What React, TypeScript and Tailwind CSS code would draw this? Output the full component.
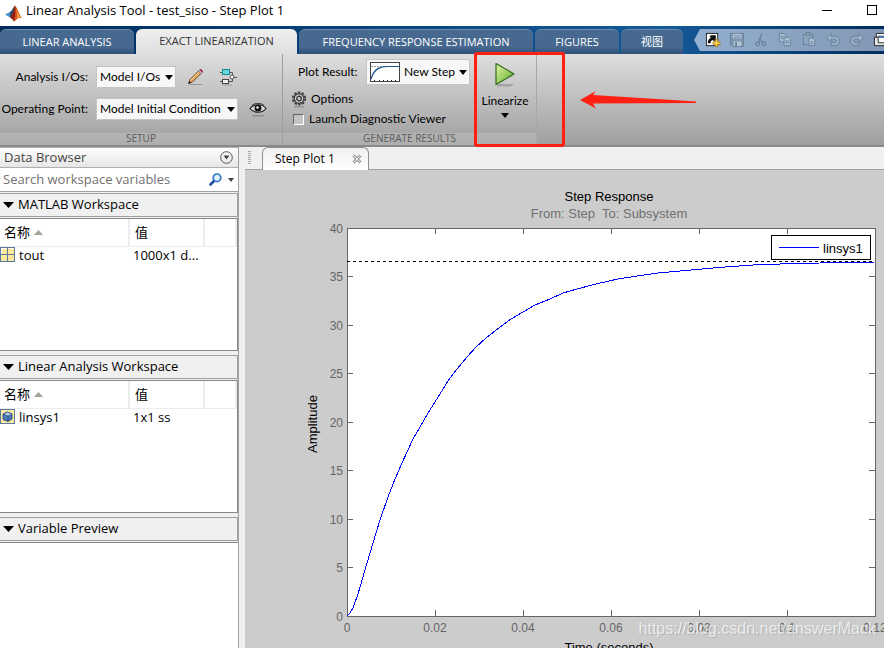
import React from 'react';
import clsx from 'clsx';

type Row = { name: string; value: string; icon: React.ReactNode };

const ribbonTabs = [
  { label: 'LINEAR ANALYSIS', width: 'w-[134px]' },
  { label: 'EXACT LINEARIZATION', width: 'w-[161px]', active: true },
  { label: 'FREQUENCY RESPONSE ESTIMATION', width: 'w-[234px]' },
  { label: 'FIGURES', width: 'w-[84px]' },
  { label: '视图', width: 'w-[62px]' },
];

/* ---------- icons ---------- */

const MatlabLogo = () => (
  <svg width="17" height="17" viewBox="0 0 17 17">
    <path d="M0 9.500 5 7l2.500 3L5 12.500Z" fill="#4a90c2" />
    <path d="M5 7C7 6 8 2 10 .5L8 11 5 12.500Z" fill="#23527c" />
    <path d="M10 .5C8.500 5 8 9 5 12.500c2 0 2.500 2 4 4 2-1 4-5 8-3.500C14.500 10 12.500 3 10 .5Z" fill="#d9541e" />
    <path d="M10 .5c1 3 .5 9.500-1 16-.8-1-1.500-3-4-4C8 9 8.500 4 10 .5Z" fill="#8c2313" />
    <path d="M11 3.500c1.500 3 2.500 6.500 6 9.500-2-.8-3.500-.5-5 1 .5-4 0-7-1-10.500Z" fill="#f29a3c" />
  </svg>
);

const Caret = ({ className }: { className?: string }) => (
  <svg width="8" height="5" viewBox="0 0 8 5" className={className}>
    <path d="M0 0h8L4 5Z" fill="currentColor" />
  </svg>
);

const PencilIcon = () => (
  <svg width="18" height="18" viewBox="0 0 18 18">
    <path d="M3 16h12v1H2Z" fill="#000" opacity=".25" />
    <path d="m1.500 15.500 1.500-4L11.500 3 14 5.500 5.500 14Z" fill="#e0a458" stroke="#5b3a12" strokeWidth=".8" />
    <path d="M3.500 12.500 12.500 3.800" stroke="#fbe0ad" strokeWidth="1" />
    <path d="m1.300 15.700 1-2.700 1.700 1.700Z" fill="#111" />
    <path d="m11.500 3 1.200-1.200L15.200 4.300 14 5.500Z" fill="#ddd" stroke="#555" strokeWidth=".5" />
    <path d="M12.700 1.800c1-1.200 3.600 1.100 2.500 2.500Z" fill="#d6336c" stroke="#8d1741" strokeWidth=".8" />
  </svg>
);

const DiagramIcon = () => (
  <svg width="17" height="18" viewBox="0 0 17 18" fill="none">
    <path d="M2 16.500h10v1H2Z" fill="#000" opacity=".2" />
    <path d="M0 4.500h3M9 4.500h3.500v3M0 13.500h3M9 13.500h3.500v-3M14 9.500h3" stroke="#555" />
    <rect x="2.500" y="1.500" width="7" height="5" fill="#6fd3d8" stroke="#168f9c" />
    <rect x="2.500" y="11.500" width="6" height="4" fill="#eee" stroke="#444" />
    <circle cx="12" cy="9" r="2" fill="#fff" stroke="#555" />
  </svg>
);

const EyeIcon = () => (
  <svg width="18" height="16" viewBox="0 0 18 16">
    <path d="M3 14h12v1.500H3Z" fill="#000" opacity=".2" />
    <path d="M1 7.500C4.500 2.500 13.500 2.500 17 7.500 13.500 12.500 4.500 12.500 1 7.500Z" fill="#ddd" stroke="#222" strokeWidth="1.200" />
    <circle cx="9" cy="7.200" r="3.400" fill="#111" />
    <circle cx="8.500" cy="6.500" r="1.200" fill="#fff" />
    <path d="M3 4.300C6.500 1.800 11.500 1.800 15 4.300" fill="none" stroke="#333" />
  </svg>
);

const GearIcon = () => (
  <svg width="16" height="17" viewBox="0 0 16 17" fill="none">
    <path d="M3 15h10v1.500H3Z" fill="#000" opacity=".2" />
    <circle cx="8" cy="7.500" r="6.200" stroke="#444" strokeWidth="1.800" strokeDasharray="2.500 1.400" />
    <circle cx="8" cy="7.500" r="4.800" fill="#d4d4d4" stroke="#444" strokeWidth="1.400" />
    <circle cx="8" cy="7.500" r="2.300" fill="#c4c4c4" stroke="#333" strokeWidth="1.300" />
  </svg>
);

const StepThumb = () => (
  <svg width="30" height="20" viewBox="0 0 30 20" className="shrink-0">
    <rect x=".5" y=".5" width="29" height="19" fill="#fff" stroke="#444" />
    <path d="M1 4.500h28" stroke="#999" strokeDasharray="2 1" />
    <path d="M1 17C4 6 11 4.500 18 4.500h11" fill="none" stroke="#1b4f8a" strokeWidth="1.200" />
    <path d="M4.500 19v-1M9.500 19v-1M13.500 19v-1M17.500 19v-1M21.500 19v-1M25.500 19v-1" stroke="#222" />
  </svg>
);

const PlayIcon = () => (
  <svg width="22" height="25" viewBox="0 0 22 25">
    <defs>
      <linearGradient id="play" x1="0" y1="0" x2="1" y2="1">
        <stop offset="0" stopColor="#e2f5a8" />
        <stop offset="1" stopColor="#5cac22" />
      </linearGradient>
    </defs>
    <path d="M3 22h17l-3 2.500H3Z" fill="#000" opacity=".18" />
    <path d="M2 1.500 20 12 2 22.500Z" fill="url(#play)" stroke="#2f6b1c" strokeWidth="1.200" strokeLinejoin="round" />
  </svg>
);

const SearchIcon = () => (
  <svg width="13" height="13" viewBox="0 0 13 13" fill="none">
    <path d="M1.500 11.500 5 8" stroke="#1f4f9e" strokeWidth="2.600" strokeLinecap="round" />
    <circle cx="8" cy="4.800" r="3.800" fill="#e4f2fb" stroke="#3278c8" strokeWidth="1.700" />
  </svg>
);

const DoubleIcon = () => (
  <svg width="15" height="15" viewBox="0 0 15 15">
    <rect x=".5" y=".5" width="14" height="14" fill="#fbe89a" stroke="#5a789c" />
    <path d="M7.500 1v13M1 7.500h13" stroke="#5a789c" />
    <path d="M1.500 6.500v-5h5M8.500 1.500h5" stroke="#fff" fill="none" />
  </svg>
);

const SystemIcon = () => (
  <svg width="15" height="15" viewBox="0 0 15 15">
    <rect x=".5" y=".5" width="14" height="14" fill="#fbeaa6" stroke="#5a789c" />
    <path d="m3 5 4.500-2L12 5v5l-4 2.500L3 10.500Z" fill="#4d7bb8" stroke="#223f6b" strokeWidth=".8" />
    <path d="m3 5 4.500-2L12 5 8 7Z" fill="#b5cdea" stroke="#223f6b" strokeWidth=".6" />
    <path d="M8 7v5.500" stroke="#223f6b" strokeWidth=".8" />
  </svg>
);

const quickIcons = [
  {
    name: 'Create shortcut',
    art: (
      <>
        <rect x="1.500" y="1.500" width="12" height="13" fill="#fff" stroke="#222" />
        <path d="M3 12c0-3 1-5 3.500-5.500L5 5l1-1.500h5.500v5L10 10 8.500 8.500C6.500 9 6 10 6 12Z" fill="#111" />
        <path d="M11 8h2.500v2.500H16V13h-2.500v2.500H11V13H8.500v-2.500H11Z" fill="#ffd95a" stroke="#a77400" strokeWidth=".8" />
      </>
    ),
  },
  {
    name: 'Save',
    art: (
      <>
        <path d="M1.500 1.500h14v14h-12l-2-2Z" fill="#8096af" stroke="#66809c" />
        <rect x="4" y="2" width="9" height="5" fill="#b4c5d8" />
        <path d="M5 4h7M5 6h7" stroke="#7890ab" />
        <path d="M5 10h8v5H5Z" fill="#b4c5d8" />
        <path d="M6.500 11h2v4h-2Z" fill="#66809c" />
      </>
    ),
  },
  {
    name: 'Cut',
    art: (
      <g fill="none" stroke="#66809c" strokeWidth="1.300">
        <path d="M9.500 1 6.500 10M6 6l4.500 5" />
        <circle cx="5" cy="12.500" r="2" />
        <circle cx="11.500" cy="12.500" r="2" />
      </g>
    ),
  },
  {
    name: 'Copy',
    art: (
      <g fill="#a9bdd2" stroke="#66809c">
        <path d="M2.500 1.500h5l2 2v7h-7Z" />
        <path d="M7.500 5.500h5l2 2v7h-7Z" />
        <path d="M4 4.500h3M4 6.500h3M9 9.500h4M9 11.500h4" />
      </g>
    ),
  },
  {
    name: 'Paste',
    art: (
      <g fill="#8ea5bd" stroke="#66809c">
        <rect x="2.500" y="2.500" width="10" height="11" />
        <rect x="5.500" y=".5" width="4" height="3" />
        <path d="M8.500 6.500h4l2 2v6h-6Z" fill="#b0c3d7" />
        <path d="M10 10.500h3M10 12.500h3" />
      </g>
    ),
  },
  {
    name: 'Undo',
    art: <path d="M6.500 1.500 1.500 6l5 4.500V7.500H10c3 0 3 4 0 4H6.500v3H10c7 0 7-10 0-10H6.500Z" fill="#9db3ca" stroke="#66809c" />,
  },
  {
    name: 'Redo',
    art: <path d="m10.500 1.500 5 4.500-5 4.500V7.500H7c-3 0-3 4 0 4h3.500v3H7c-7 0-7-10 0-10h3.500Z" fill="#9db3ca" stroke="#66809c" />,
  },
  {
    name: 'Switch windows',
    art: (
      <g stroke="#222">
        <path d="M3.500 1.500h12v10h-12Z" fill="#fff" />
        <path d="M1.500 5.500h12v9h-12Z" fill="#e8e8e8" />
        <path d="M5.500 4.500h11v7h-11Z" fill="#fff" />
        <path d="M6 5.500h10" stroke="#4d7bb8" strokeWidth="2" />
      </g>
    ),
  },
];

/* ---------- ribbon ---------- */

const TitleBar = () => (
  <header className="flex h-[26px] shrink-0 items-center bg-white pl-[5px] text-[13px] text-black">
    <MatlabLogo />
    <h1 className="ml-1 flex-1 whitespace-nowrap pb-1">Linear Analysis Tool - test_siso - Step Plot 1</h1>
    <button aria-label="Minimize" className="mr-[35px] flex h-5 w-[10px] items-start pt-[7px]">
      <span className="h-px w-full bg-black" />
    </button>
    <button aria-label="Maximize" className="mb-[6px] mr-[7px] size-[10px] border border-black" />
  </header>
);

const TabBar = () => (
  <div className="flex h-7 shrink-0 items-end gap-[2px] overflow-hidden bg-linear-to-r from-[#002a5c] via-[#155a99] via-75% to-[#002e60]">
    {ribbonTabs.map((tab) => (
      <button
        key={tab.label}
        className={clsx(
          'h-[25px] shrink-0 whitespace-nowrap rounded-t-md text-[11px]',
          tab.width,
          tab.active
            ? 'bg-linear-to-b from-[#f0f0f0] to-[#dedede] text-[#333]'
            : 'border-t border-[#6f8fb0] bg-linear-to-b from-[#47698f] from-70% to-[#2f5078] text-white',
        )}
      >
        {tab.label}
      </button>
    ))}
    <div className="ml-[9px] mb-[3px] flex h-[22px] flex-1 items-center gap-2 overflow-hidden bg-linear-to-r from-[#93afcf] to-[#8398b5] pl-[11px] [clip-path:polygon(0_50%,6px_0,100%_0,100%_100%,6px_100%)]">
      {quickIcons.map((icon) => (
        <button key={icon.name} aria-label={icon.name} className="shrink-0">
          <svg width="16" height="16" viewBox="0 0 17 17">
            {icon.art}
          </svg>
        </button>
      ))}
    </div>
  </div>
);

type PickerProps = { id: string; value: string; className: string; thumb?: React.ReactNode };

const Picker = ({ id, value, className, thumb }: PickerProps) => (
  <div className={clsx('relative flex items-center border border-[#c4c4c4] bg-[#f7f7f7] pl-[3px]', className)}>
    {thumb}
    <select id={id} className="h-full w-full appearance-none bg-transparent text-xs text-black outline-none">
      <option>{value}</option>
    </select>
    <Caret className="pointer-events-none absolute right-[2px]" />
  </div>
);

const SectionLabel = ({ children }: { children: React.ReactNode }) => (
  <div className="flex h-3 shrink-0 items-center justify-center bg-white/15 font-['Open_Sans',sans-serif] text-[10px] text-[#5c5c5c]">
    {children}
  </div>
);

const Toolstrip = () => (
  <div className="flex h-[93px] shrink-0 border-b-2 border-[#8a8a8a] bg-linear-to-b from-[#dedede] to-[#9f9f9f] font-['Lato',sans-serif] text-xs text-black">
    <section className="flex w-[283px] shrink-0 flex-col border-r border-[#9d9d9d]">
      <div className="flex flex-1 flex-col gap-[10px] pt-3">
        <div className="flex h-[22px] items-center">
          <label htmlFor="ios" className="mr-2 w-[88px] shrink-0 whitespace-nowrap text-right">Analysis I/Os:</label>
          <Picker id="ios" value="Model I/Os" className="h-[22px] w-20" />
          <button aria-label="Edit I/Os" className="ml-[11px]"><PencilIcon /></button>
          <button aria-label="Highlight I/Os" className="ml-[15px]"><DiagramIcon /></button>
        </div>
        <div className="flex h-[22px] items-center">
          <label htmlFor="op" className="mr-2 w-[88px] shrink-0 whitespace-nowrap text-right">Operating Point:</label>
          <Picker id="op" value="Model Initial Condition" className="h-[22px] w-[142px]" />
          <button aria-label="View operating point" className="ml-[11px]"><EyeIcon /></button>
        </div>
      </div>
      <SectionLabel>SETUP</SectionLabel>
    </section>

    <section className="flex w-[254px] shrink-0 flex-col border-r border-[#a8a8a8]">
      <div className="flex flex-1">
        <div className="flex w-[191px] flex-col pl-2 pt-[5px]">
          <div className="flex items-center pl-[7px]">
            <label htmlFor="plot" className="w-[68px] shrink-0 whitespace-nowrap">Plot Result:</label>
            <Picker
              id="plot"
              value="New Step"
              className="h-[26px] w-[104px] gap-1"
              thumb={<StepThumb />}
            />
          </div>
          <button className="mt-1 flex h-5 items-center gap-1">
            <GearIcon />
            Options
          </button>
          <label className="flex h-5 items-center gap-[5px] whitespace-nowrap pl-[2px]">
            <input type="checkbox" className="size-[11px] appearance-none border border-[#666] border-b-white border-r-white bg-[#c4c4c4]" />
            Launch Diagnostic Viewer
          </label>
        </div>
        <button className="flex flex-1 flex-col items-center pt-2">
          <PlayIcon />
          <span className="mt-[6px]">Linearize</span>
          <Caret className="mt-1" />
        </button>
      </div>
      <SectionLabel>GENERATE RESULTS</SectionLabel>
    </section>
  </div>
);

/* ---------- data browser ---------- */

const PaneHeader = ({ children }: { children: React.ReactNode }) => (
  <button className="flex h-6 w-full shrink-0 items-center gap-1 border border-l-0 border-[#a0a0a0] bg-[#f0f0f0] pl-[3px] text-left text-[13px] text-black">
    <svg width="11" height="6" viewBox="0 0 11 6">
      <path d="M0 0h11L5.500 6Z" />
    </svg>
    {children}
  </button>
);

const Workspace = ({ title, rows }: { title: string; rows: Row[] }) => (
  <section className="shrink-0">
    <PaneHeader>{title}</PaneHeader>
    <div className="mb-1 mt-px h-[133px] border border-l-0 border-[#828790] bg-white">
      <table className="w-full table-fixed text-[13px] leading-4 text-black">
        <thead>
          <tr className="h-[27px] border-b border-[#ececec] text-left">
            <th className="w-[129px] border-r-2 border-[#ececec] pl-1 font-normal">
              <span className="flex items-center gap-1">
                名称
                <svg width="9" height="5" viewBox="0 0 9 5">
                  <path d="M0 5h9L4.500 0Z" fill="#a3a396" />
                </svg>
              </span>
            </th>
            <th className="w-[75px] border-r-2 border-[#ececec] pl-[5px] font-normal">值</th>
            <th className="border-r-2 border-[#ececec]" />
          </tr>
        </thead>
        <tbody>
          {rows.map((row) => (
            <tr key={row.name} className="h-4">
              <td className="whitespace-nowrap">
                <span className="flex items-center gap-1">
                  {row.icon}
                  {row.name}
                </span>
              </td>
              <td className="whitespace-nowrap pl-1">{row.value}</td>
              <td />
            </tr>
          ))}
        </tbody>
      </table>
    </div>
  </section>
);

const DataBrowser = () => (
  <aside className="flex w-[239px] shrink-0 flex-col border-r border-[#a0a0a0]">
    <div className="flex h-[21px] shrink-0 items-center border-b border-t border-[#b0b0b0] bg-linear-to-b from-white to-[#e6e6e6] pl-1 text-[13px] text-[#444]">
      <h2 className="flex-1">Data Browser</h2>
      <button aria-label="Panel actions" className="mr-[5px]">
        <svg width="13" height="13" viewBox="0 0 13 13">
          <circle cx="6.500" cy="6.500" r="5.800" fill="none" stroke="#555" />
          <path d="M3.500 4.500h6l-3 4Z" fill="#444" />
        </svg>
      </button>
    </div>
    <div className="mb-px flex h-6 shrink-0 items-center border-b border-[#a0a0a0] bg-white pl-[3px]">
      <input
        aria-label="Search workspace variables"
        placeholder="Search workspace variables"
        className="min-w-0 flex-1 text-[13px] outline-none placeholder:text-[#707070]"
      />
      <button aria-label="Search"><SearchIcon /></button>
      <button aria-label="Search options" className="ml-[6px] mr-1 text-[#444]">
        <svg width="6" height="4" viewBox="0 0 6 4"><path d="M0 0h6L3 4Z" fill="currentColor" /></svg>
      </button>
    </div>
    <Workspace title="MATLAB Workspace" rows={[{ name: 'tout', value: '1000x1 d...', icon: <DoubleIcon /> }]} />
    <Workspace title="Linear Analysis Workspace" rows={[{ name: 'linsys1', value: '1x1 ss', icon: <SystemIcon /> }]} />
    <PaneHeader>Variable Preview</PaneHeader>
    <div className="mt-px flex-1 border-t border-[#828790] bg-white" />
  </aside>
);

/* ---------- step plot ---------- */

// plot area inside the figure
const AX = { left: 102, right: 630, top: 58, bottom: 446 };

const curve = [
  [102, 446], [105, 443], [108, 438], [113, 424], [122, 393], [128, 373], [135, 350], [143, 327], [150, 309],
  [157, 293], [168, 269], [175, 257], [183, 243], [190, 232], [203, 211], [212, 199], [222, 187], [231, 177],
  [241, 168], [255, 157], [266, 149], [278, 142], [290, 135], [305, 129], [318, 123], [332, 119], [351, 114],
  [373, 109], [392, 106], [413, 103], [435, 101], [457, 99], [480, 97], [508, 95], [535, 94], [575, 93], [630, 92],
];

const xTicks = ['0', '0.02', '0.04', '0.06', '0.08', '0.1', '0.12'];
const yTicks = [0, 5, 10, 15, 20, 25, 30, 35, 40];

const xAt = (i: number) => AX.left + Math.round((i * (AX.right - AX.left)) / 6);
const yAt = (v: number) => AX.bottom - Math.round((v * (AX.bottom - AX.top)) / 40);

const StepPlot = () => (
  <svg viewBox="0 0 639 488" className="block w-full font-['Liberation_Sans',sans-serif] text-[13px]" role="img" aria-label="Step Response">
    <text x="364" y="31" textAnchor="middle">Step Response</text>
    <text x="364" y="48" textAnchor="middle" fill="#707070" xmlSpace="preserve">From: Step  To: Subsystem</text>
    <g shapeRendering="crispEdges" fill="none" stroke="#666">
      <rect x={AX.left + 0.5} y={AX.top + 0.5} width={AX.right - AX.left} height={AX.bottom - AX.top} fill="#fff" />
      {xTicks.map((t, i) => (
        <path key={t} d={`M${xAt(i) + 0.5} ${AX.bottom}v-6M${xAt(i) + 0.5} ${AX.top}v6`} />
      ))}
      {yTicks.map((v) => (
        <path key={v} d={`M${AX.left} ${yAt(v) + 0.5}h6M${AX.right} ${yAt(v) + 0.5}h-6`} />
      ))}
      <path d={`M${AX.left} 91.500H${AX.right}`} stroke="#000" strokeDasharray="3 3" />
      <polyline points={curve.map((p) => p.join(',')).join(' ')} stroke="#0000ff" />
      <rect x="526.500" y="65.500" width="99" height="24" fill="#fff" stroke="#000" />
      <path d="M534 77.500h40" stroke="#0000ff" />
    </g>
    <text x="578" y="83">linsys1</text>
    <g fill="#666" className="text-xs">
      {xTicks.map((t, i) => (
        <text key={t} x={xAt(i)} y="462" textAnchor="middle">{t}</text>
      ))}
      {yTicks.map((v) => (
        <text key={v} x="98" y={yAt(v) + 5} textAnchor="end">{v}</text>
      ))}
    </g>
    <text transform="translate(72 254) rotate(-90)" textAnchor="middle">Amplitude</text>
    <text x="364" y="482" textAnchor="middle">Time (seconds)</text>
  </svg>
);

const PlotArea = () => (
  <main className="flex min-w-0 flex-1 flex-col overflow-hidden">
    <div className="flex h-[23px] shrink-0 items-stretch">
      <div className="flex w-[17px] justify-center border-b border-[#a0a0a0] py-1 pr-2">
        <span className="w-[3px] bg-[repeating-linear-gradient(#aaa_0_1px,transparent_1px_2px)]" />
      </div>
      <div className="flex w-[107px] items-center rounded-t-md border border-b-0 border-[#909090] bg-linear-to-b from-[#f0f0f0] to-white pl-3 text-xs text-black">
        <button className="flex-1 whitespace-nowrap text-left">Step Plot 1</button>
        <button aria-label="Close Step Plot 1" className="mr-[6px]">
          <svg width="10" height="10" viewBox="0 0 10 10">
            <path d="m1.500 1.500 7 7m0-7-7 7" stroke="#999" strokeWidth="3" />
            <path d="m1.500 1.500 7 7m0-7-7 7" stroke="#eee" strokeWidth="1" />
          </svg>
        </button>
      </div>
      <div className="flex-1 border-b border-[#a0a0a0]" />
    </div>
    <div className="flex-1 overflow-hidden bg-[#ccc]">
      <StepPlot />
    </div>
  </main>
);

export default function App() {
  return (
    <div className="relative flex h-screen flex-col overflow-hidden bg-[#f0f0f0] font-['Open_Sans','Noto_Sans_CJK_SC',sans-serif]">
      <TitleBar />
      <TabBar />
      <Toolstrip />
      <div className="flex min-h-0 flex-1 gap-[6px]">
        <DataBrowser />
        <PlotArea />
      </div>

      {/* Annotations on top of the window */}
      <div className="pointer-events-none absolute left-[474px] top-[52px] h-[95px] w-[91px] rounded-[3px] border-3 border-[#ff2014]" />
      <svg width="118" height="20" viewBox="0 0 118 20" className="pointer-events-none absolute left-[580px] top-[90px]">
        <path d="M0 10 16 1 13 5 116 11.500v1.500L13 13.500 16 18.500Z" fill="#ff2014" />
      </svg>
      <p className="pointer-events-none absolute bottom-[9px] right-[8px] font-['Liberation_Sans',sans-serif] text-base leading-5 text-white/70 [text-shadow:1px_1px_0_rgb(0_0_0/0.15)]">
        https://blog.csdn.net/answerMack
      </p>
    </div>
  );
}
